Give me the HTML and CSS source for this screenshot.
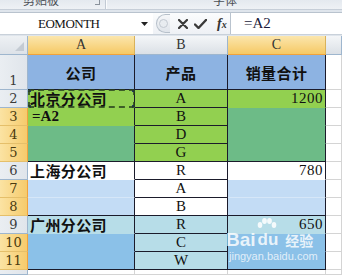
FILE: index.html
```html
<!DOCTYPE html>
<html lang="zh-CN">
<head>
    <meta charset="UTF-8">
    <title>销量合计</title>
    <link rel="stylesheet" href="styles.css">
</head>
<body>
    <div class="ribbon">
        <div class="rb-group rb-clip"><span class="rb-label">剪贴板</span><i class="launcher"></i></div>
        <div class="rb-group rb-font"><span class="rb-label">字体</span></div>
    </div>
    <div class="fwrap">
        <div class="fbar">
            <div class="namebox">
                <span class="name">EOMONTH</span>
                <svg class="drop" width="7" height="4" viewBox="0 0 7 4"><path d="M0 0h7L3.5 4z" fill="#222"/></svg>
            </div>
            <div class="fbtns">
                <span class="grip"><i></i></span>
                <svg class="ic-x" width="10" height="10" viewBox="0 0 10 10"><path d="M1 1l8 8M9 1L1 9" stroke="#3a3a3a" stroke-width="2.2" stroke-linecap="round"/></svg>
                <svg class="ic-ok" width="13" height="10" viewBox="0 0 13 10"><path d="M1 5.5l3.5 3.5L12 1" stroke="#3a3a3a" stroke-width="2.4" fill="none" stroke-linecap="round" stroke-linejoin="round"/></svg>
                <span class="fx">f<small>x</small></span>
            </div>
            <div class="finput">=A2</div>
        </div>
    </div>

    <div class="sheet">
        <div class="corner"><i></i></div>
        <div class="ch sel">A</div>
        <div class="ch">B</div>
        <div class="ch sel">C</div>
        <div class="ch"></div>

        <div class="rh">1</div>
        <div class="c rd bd blue zh mid ctr">公司</div>
        <div class="c rd bd blue zh mid ctr">产品</div>
        <div class="c rd bd blue zh mid ctr">销量合计</div>
        <div class="c"></div>

        <div class="rh">2</div>
        <div class="c rd bn grn zh ants">北京分公司<span class="marq"></span></div>
        <div class="c rd bd grn ctr">A</div>
        <div class="c rd bn grn rt num">1200</div>
        <div class="c"></div>

        <div class="rh sel">3</div>
        <div class="c rd bn grn edit">=A2</div>
        <div class="c rd bd grn ctr">B</div>
        <div class="c rd bn gsel"></div>
        <div class="c"></div>

        <div class="rh sel">4</div>
        <div class="c rd bn gsel"></div>
        <div class="c rd bd grn ctr">D</div>
        <div class="c rd bn gsel"></div>
        <div class="c"></div>

        <div class="rh sel">5</div>
        <div class="c rd bd gsel"></div>
        <div class="c rd bd grn ctr">G</div>
        <div class="c rd bd gsel"></div>
        <div class="c"></div>

        <div class="rh">6</div>
        <div class="c rd bn zh">上海分公司</div>
        <div class="c rd bd ctr">R</div>
        <div class="c rd bn rt num">780</div>
        <div class="c"></div>

        <div class="rh sel">7</div>
        <div class="c rd bl lsel"></div>
        <div class="c rd bd ctr">A</div>
        <div class="c rd bl lsel"></div>
        <div class="c"></div>

        <div class="rh sel">8</div>
        <div class="c rd bd lsel"></div>
        <div class="c rd bd ctr">B</div>
        <div class="c rd bd lsel"></div>
        <div class="c"></div>

        <div class="rh">9</div>
        <div class="c rd bn teal zh">广州分公司</div>
        <div class="c rd bd teal ctr">R</div>
        <div class="c rd bn teal rt num">650</div>
        <div class="c"></div>

        <div class="rh sel">10</div>
        <div class="c rd bn tsel"></div>
        <div class="c rd bd teal ctr">C</div>
        <div class="c rd bn tsel"></div>
        <div class="c"></div>

        <div class="rh sel">11</div>
        <div class="c rd bd tsel"></div>
        <div class="c rd bd teal ctr">W</div>
        <div class="c rd bd tsel"></div>
        <div class="c"></div>

        <div class="rh"></div>
        <div class="c"></div>
        <div class="c"></div>
        <div class="c"></div>
        <div class="c"></div>

        <div class="watermark">
            <div class="wm-logo">
                <span class="wm-bai">Bai</span>
                <span class="wm-du">
                    <svg class="paw" width="20" height="11" viewBox="0 0 20 11">
                        <ellipse cx="3" cy="7" rx="2.3" ry="3" />
                        <ellipse cx="7.5" cy="3" rx="2.4" ry="3" />
                        <ellipse cx="12.5" cy="3" rx="2.4" ry="3" />
                        <ellipse cx="17" cy="7" rx="2.3" ry="3" />
                    </svg>du
                </span>
                <span class="wm-jy">经验</span>
            </div>
            <div class="wm-url">jingyan.baidu.com</div>
        </div>
    </div>
</body>
</html>
```

FILE: styles.css
```css
:root {
    --grid: #d4d4d4; --hdr-line: #9eb6ce; --dark: #1b1b2b;
    --blue: #8db3e2; --green: #92d050; --green-sel: #6dbb87;
    --white-sel: #c3dcf5; --teal: #b7dde8; --teal-sel: #8bc1e8;
}
body { margin: 0; width: 342px; height: 275px; overflow: hidden; background: #fff; font-family: "Liberation Serif", "Noto Sans CJK SC", serif; color: #111; }

/* ribbon strip, cut off at the top */
.ribbon { height: 9px; overflow: hidden; display: flex; background: linear-gradient(#e4e9ef, #eef1f5); border-bottom: 1px solid #c6ced8; }
.rb-group { position: relative; height: 9px; }
.rb-clip { width: 105px; border-right: 1px solid #c2cad4; box-shadow: 1px 0 0 #fbfcfd; }
.rb-font { flex: 1; }
.rb-label { display: block; margin-top: -7px; font-family: "Noto Sans CJK SC", sans-serif; font-size: 12px; line-height: 14px; color: #4b4f55; }
.rb-clip .rb-label { padding-left: 23px; }
.rb-font .rb-label { padding-left: 107px; }
.launcher { position: absolute; right: 5px; top: 0; width: 4px; height: 4px; border-right: 1px solid #8a929c; border-bottom: 1px solid #8a929c; }

/* formula bar */
.fwrap { padding: 2px 0 1px; background: #dfe5ec; }
.fbar { display: flex; height: 23px; box-sizing: border-box; background: #fff; border-top: 1px solid #b9c3ce; border-bottom: 1px solid #c9d1da; }
.namebox { width: 153px; display: flex; align-items: center; }
.name { padding-left: 38px; font-size: 13px; letter-spacing: -0.5px; color: #111; }
.drop { margin-left: auto; margin-right: 5px; }
.fbtns { width: 77px; display: flex; align-items: center; background: linear-gradient(#fbfcfd, #eef1f5); }
.grip { margin-left: 3px; width: 14px; height: 19px; box-sizing: border-box; border: 1px solid #b7c0ca; border-right: none; border-radius: 10px 0 0 10px; background: linear-gradient(#f6f7f9, #dfe4ea); display: flex; align-items: center; justify-content: center; }
.grip i { width: 7px; height: 7px; border-radius: 50%; background: #e8ecf0; border: 1px solid #c2c9d1; }
.ic-x { margin-left: 8px; }
.ic-ok { margin-left: 6px; }
.fx { margin-left: 10px; font-style: italic; font-weight: bold; font-size: 14px; color: #333; }
.fx small { font-size: 10px; }
.finput { flex: 1; border-left: 1px solid #b9c3ce; padding-left: 13px; font-size: 15px; line-height: 21px; color: #1a1a3a; }

/* sheet */
.sheet { position: relative; display: grid; grid-template-columns: 28px 107px 93px 98px 16px; grid-template-rows: 19px 35px repeat(10, 18px) 5px; }
.corner { background: linear-gradient(#eef1f4, #dde2e8); border-right: 1px solid var(--hdr-line); border-bottom: 1px solid var(--hdr-line); box-sizing: border-box; position: relative; }
.corner i { position: absolute; right: 3px; bottom: 3px; width: 0; height: 0; border-left: 9px solid transparent; border-bottom: 9px solid #c4cbd3; }
.ch { box-sizing: border-box; border-right: 1px solid var(--hdr-line); border-bottom: 1px solid var(--hdr-line); background: linear-gradient(#f4f6f8, #dbe0e6); display: flex; align-items: center; justify-content: center; font-size: 14px; color: #333; }
.ch.sel { background: linear-gradient(#fbe6ad, #f6c965); border-right-color: #d9b25a; border-bottom: 1px solid #f0a23c; }
.rh { box-sizing: border-box; border-right: 1px solid var(--hdr-line); border-bottom: 1px solid var(--hdr-line); background: linear-gradient(90deg, #eaeef2, #e0e5eb); display: flex; align-items: flex-end; justify-content: center; font-family: "DejaVu Serif", serif; font-size: 13px; line-height: 16px; color: #3b3b3b; }
.rh.sel { background: linear-gradient(90deg, #fbe3a3, #f6cb6c); border-right-color: #f0a23c; border-bottom-color: #e5bf6a; color: #4a3a10; }

.c { box-sizing: border-box; border-right: 1px solid var(--grid); border-bottom: 1px solid var(--grid); display: flex; align-items: flex-end; padding: 0 2px; white-space: nowrap; font-size: 15px; line-height: 17px; background: #fff; }
.rd { border-right-color: var(--dark); }
.bd { border-bottom-color: var(--dark); }
.bn { border-bottom-color: transparent; }
.bl { border-bottom-color: #d6e7f8; }
.ctr { justify-content: center; }
.rt { justify-content: flex-end; }
.mid { align-items: center; }
.num { letter-spacing: 0.5px; }
.zh { font-family: "Noto Sans CJK SC", sans-serif; font-weight: bold; font-size: 15px; letter-spacing: 0.4px; }
.edit { font-weight: bold; padding-left: 4px; }

.blue { background: var(--blue); }
.grn { background: var(--green); }
.gsel { background: var(--green-sel); }
.lsel { background: var(--white-sel); }
.teal { background: var(--teal); }
.tsel { background: var(--teal-sel); }

/* copy marquee round A2 */
.ants { position: relative; }
.marq { position: absolute; left: 0; top: -1px; right: -1px; bottom: -1px; border: 2px dashed rgba(40, 64, 30, 0.8); border-radius: 2px;
    background: linear-gradient(#22347a, #22347a) left top, linear-gradient(#22347a, #22347a) right top, linear-gradient(#22347a, #22347a) left bottom, linear-gradient(#22347a, #22347a) right bottom;
    background-size: 3px 3px; background-repeat: no-repeat; background-origin: border-box; }

/* baidu watermark over the sheet */
.watermark { position: absolute; left: 226px; top: 185px; color: rgba(255, 255, 255, 0.82); pointer-events: none; }
.wm-logo { display: flex; align-items: flex-end; height: 28px; }
.wm-bai { font-family: "Liberation Sans", sans-serif; font-weight: bold; font-size: 19px; line-height: 18px; }
.wm-du { position: relative; margin-left: 2px; font-family: "Liberation Sans", sans-serif; font-weight: bold; font-size: 17px; line-height: 18px; }
.paw { position: absolute; left: -1px; top: -13px; fill: rgba(255, 255, 255, 0.85); }
.wm-jy { margin-left: 7px; font-family: "Noto Sans CJK SC", sans-serif; font-weight: bold; font-size: 14px; line-height: 18px; }
.wm-url { margin-top: 1px; padding-left: 3px; font-family: "Liberation Sans", sans-serif; font-size: 11px; line-height: 12px; color: rgba(255, 255, 255, 0.75); }
```
